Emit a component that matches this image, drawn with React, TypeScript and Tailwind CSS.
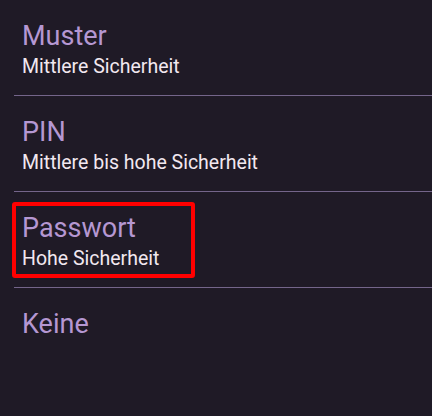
import React from "react";

const items = [
  { title: "Muster", sub: "Mittlere Sicherheit" },
  { title: "PIN", sub: "Mittlere bis hohe Sicherheit" },
  { title: "Passwort", sub: "Hohe Sicherheit", boxed: true },
  { title: "Keine" },
];

export default function App() {
  return (
    <div className="w-[432px] h-[416px] bg-[#1f1a26] overflow-hidden" style={{ fontFamily: "Roboto, 'Noto Sans', sans-serif" }}>
      {items.map((it, i) => (
        <div
          key={i}
          className={`relative h-[96px] ml-[14px] pl-[8px] pt-[20px] ${i < 3 ? "border-b border-[#74658a]" : ""}`}
        >
          <div className="text-[27px] leading-[32px] text-[#b597d2]">{it.title}</div>
          {it.sub && <div className="mt-[2px] text-[19.5px] leading-[26px] text-[#f2e8f0]">{it.sub}</div>}
          {it.boxed && (
            <div className="absolute left-[-2px] top-[10px] w-[183px] h-[76px] border-[4px] border-[#ff0000] rounded-[3px]" />
          )}
        </div>
      ))}
    </div>
  );
}
